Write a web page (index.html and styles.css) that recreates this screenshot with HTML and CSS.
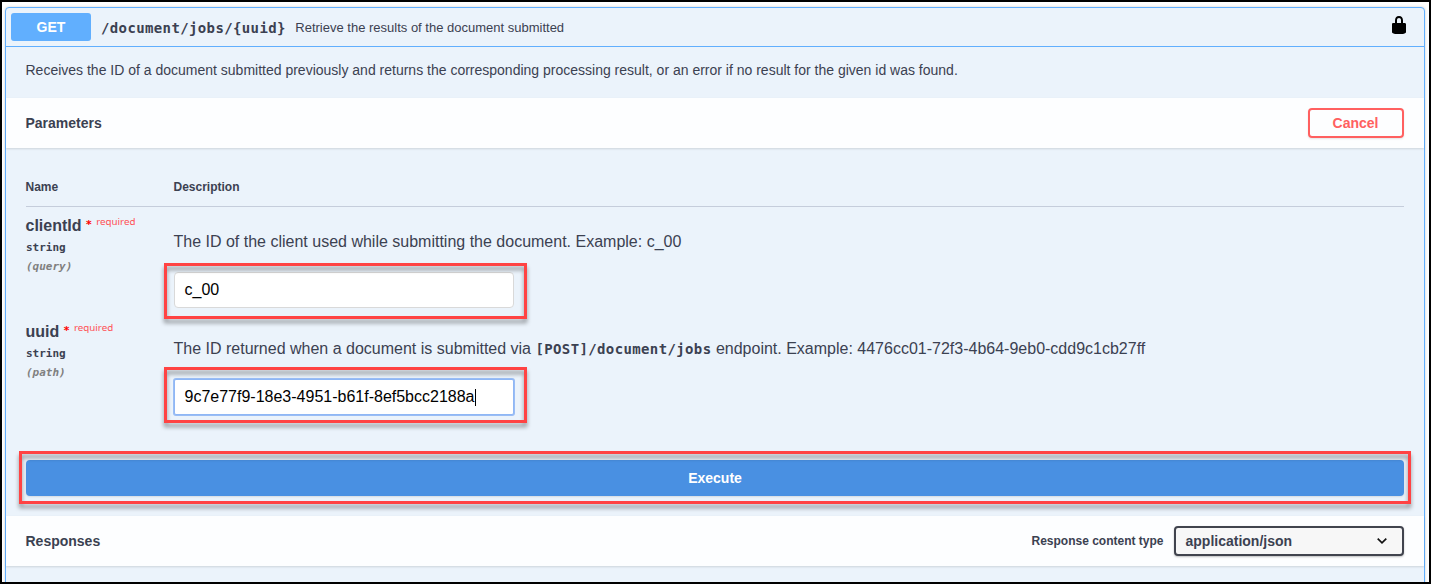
FILE: index.html
```html
<!DOCTYPE html>
<html lang="en">
<head>
<meta charset="utf-8">
<title>GET /document/jobs/{uuid}</title>
<link rel="stylesheet" href="styles.css">
</head>
<body>
<main class="frame">
  <section class="opblock">
    <header class="summary">
      <span class="method">GET</span>
      <span class="path">/document/jobs/{uuid}</span>
      <span class="summary-text">Retrieve the results of the document submitted</span>
      <svg class="lock" viewBox="0 0 20 20" width="20" height="20"><path d="M15.8 8H14V5.6C14 2.703 12.665 1 10 1 7.334 1 6 2.703 6 5.6V8H4c-.553 0-1 .646-1 1.199V17c0 .549.428 1.139.951 1.307l1.197.387C5.672 18.861 6.55 19 7.1 19h5.8c.549 0 1.428-.139 1.951-.307l1.196-.387c.524-.167.953-.757.953-1.306V9.199C17 8.646 16.352 8 15.8 8zM12 8H8V5.199C8 3.754 8.797 3 10 3c1.203 0 2 .754 2 2.199V8z"/></svg>
    </header>
    <p class="description">Receives the ID of a document submitted previously and returns the corresponding processing result, or an error if no result for the given id was found.</p>
    <div class="section-header parameters-header">
      <h4 class="section-title">Parameters</h4>
      <button class="cancel">Cancel</button>
    </div>
    <div class="parameters">
      <div class="row head">
        <span>Name</span>
        <span>Description</span>
      </div>
      <div class="row param">
        <div class="param-name">
          <div class="name">clientId<span class="star">*</span><span class="required">required</span></div>
          <div class="type">string</div>
          <div class="in">(query)</div>
        </div>
        <div class="param-desc">
          <p class="text">The ID of the client used while submitting the document. Example: c_00</p>
          <div class="field"><div class="input">c_00</div><span class="highlight"></span></div>
        </div>
      </div>
      <div class="row param second">
        <div class="param-name">
          <div class="name">uuid<span class="star">*</span><span class="required">required</span></div>
          <div class="type">string</div>
          <div class="in">(path)</div>
        </div>
        <div class="param-desc">
          <p class="text">The ID returned when a document is submitted via <code class="code">[POST]/document/jobs</code> endpoint. Example: 4476cc01-72f3-4b64-9eb0-cdd9c1cb27ff</p>
          <div class="field"><div class="input focused">9c7e77f9-18e3-4951-b61f-8ef5bcc2188a<span class="caret"></span></div><span class="highlight focused-highlight"></span></div>
        </div>
      </div>
    </div>
    <div class="execute-wrap">
      <button class="execute">Execute</button>
      <span class="highlight execute-highlight"></span>
    </div>
    <div class="section-header responses-header">
      <h4 class="section-title">Responses</h4>
      <span class="content-label">Response content type</span>
      <div class="select"><span>application/json</span>
        <svg width="12" height="8" viewBox="0 0 12 8"><path d="M1.7 1.7 6 5.8l4.300-4.100" fill="none" stroke="#111" stroke-width="1.700"/></svg>
      </div>
    </div>
  </section>
</main>
</body>
</html>
```

FILE: styles.css
```css
* { box-sizing: border-box; }
body {
  margin: 0;
  font-family: "Liberation Sans", Arial, sans-serif;
  color: #3b4151;
  background: #fff;
}
p, h4 { margin: 0; }
button { font-family: inherit; font-weight: 700; font-size: 14px; padding: 0; }
.frame {
  height: 584px;
  overflow: hidden;
  border: 2px solid #000;
  padding: 5px 4px 0 3px;
}
.opblock {
  height: 620px;
  border: 1px solid #61affe;
  border-radius: 4px;
  background: #ebf3fb;
  box-shadow: 0 0 3px rgba(0, 0, 0, .19);
}
.summary {
  height: 39px;
  display: flex;
  align-items: center;
  padding: 0 15px 0 5px;
  border-bottom: 1px solid #61affe;
}
.method {
  width: 80px;
  height: 28px;
  line-height: 28px;
  border-radius: 3px;
  background: #61affe;
  color: #fff;
  font-size: 14px;
  font-weight: 700;
  text-align: center;
}
.path {
  padding: 2px 9.500px 0 10px;
  font: 700 14px "DejaVu Sans Mono", monospace;
  letter-spacing: .37px;
}
.summary-text { flex: 1; font-size: 13px; }
.lock { margin-bottom: 4px; }
.description {
  height: 51px;
  padding: 15px 20px 0 19.500px;
  font-size: 14px;
  line-height: 17px;
}
.section-header {
  height: 50px;
  display: flex;
  align-items: center;
  padding: 0 20px 0 19.500px;
  background: rgba(255, 255, 255, .87);
  box-shadow: 0 1px 2px rgba(0, 0, 0, .13);
}
.section-title { flex: 1; font-size: 14px; line-height: 16px; }
.cancel {
  width: 96px;
  height: 30px;
  border: 2px solid #ff6060;
  border-radius: 4px;
  background: transparent;
  color: #ff6060;
  box-shadow: 0 1px 2px rgba(0, 0, 0, .1);
  padding-right: 1px;
}
.parameters { height: 303px; padding: 30px 20px 0; }
.row { display: grid; grid-template-columns: 148px 1fr; }
.head {
  height: 29px;
  padding-top: 1px;
  border-bottom: 1px solid #c5cddb;
  font-size: 12px;
  font-weight: 700;
  line-height: 16px;
}
.head span, .name, .text { text-indent: -.5px; }
.param { height: 106px; }
.param-name { padding-top: 9px; }
.name { height: 19px; font-size: 16px; font-weight: 700; line-height: 19px; white-space: nowrap; }
.star { display: inline-block; margin-left: 4px; font: 700 11px/10px "DejaVu Sans Mono", monospace; text-indent: 0; color: #f00; vertical-align: 3px; }
.required { margin-left: 4px; font: 400 9.800px/10px "Noto Sans", sans-serif; color: #ff5055; vertical-align: 6px; }
.type, .in { font: 700 11px/19px "DejaVu Sans Mono", monospace; }
.type { padding-top: 3px; }
.in { font-style: italic; color: #808080; }
.text { padding-top: 25px; font-size: 16px; line-height: 19px; white-space: nowrap; }
.second .text { padding-top: 26px; }
.code { font: 700 14px/16px "DejaVu Sans Mono", monospace; letter-spacing: .37px; }
.field { position: relative; margin-top: 21px; }
.input {
  width: 340px;
  height: 36px;
  display: flex;
  align-items: center;
  padding: 0 9.500px;
  border: 1px solid #d9d9d9;
  border-radius: 4px;
  background: #fff;
  color: #000;
  font-size: 16px;
}
.focused { border-color: #8fb7f5; box-shadow: 0 0 0 1px #9abdf5; border-radius: 2px; }
.caret { width: 1px; height: 17px; background: #000; }
.highlight {
  position: absolute;
  left: -10px;
  top: -9px;
  width: 363px;
  height: 56px;
  border: 3px solid #ff4343;
  filter: drop-shadow(0 4px 2px rgba(0, 0, 0, .4));
}
.focused-highlight { top: -12px; }
.execute-wrap { position: relative; height: 65px; padding: 9px 20px 0; }
.execute {
  width: 100%;
  height: 36px;
  border: 0;
  border-radius: 4px;
  background: #4990e2;
  color: #fff;
  box-shadow: 0 1px 2px rgba(0, 0, 0, .1);
}
.execute-highlight { left: 13px; right: 13px; top: 0; width: auto; height: 53px; }
.content-label { margin-right: 10.500px; font-size: 12px; font-weight: 700; }
.select {
  width: 230px;
  height: 30px;
  display: flex;
  align-items: center;
  justify-content: space-between;
  padding: 0 14px 0 9.500px;
  border: 2px solid #41444e;
  border-radius: 4px;
  background: #f7f7f7;
  box-shadow: 0 1px 2px rgba(0, 0, 0, .25);
  font-size: 14px;
  font-weight: 700;
}
```
